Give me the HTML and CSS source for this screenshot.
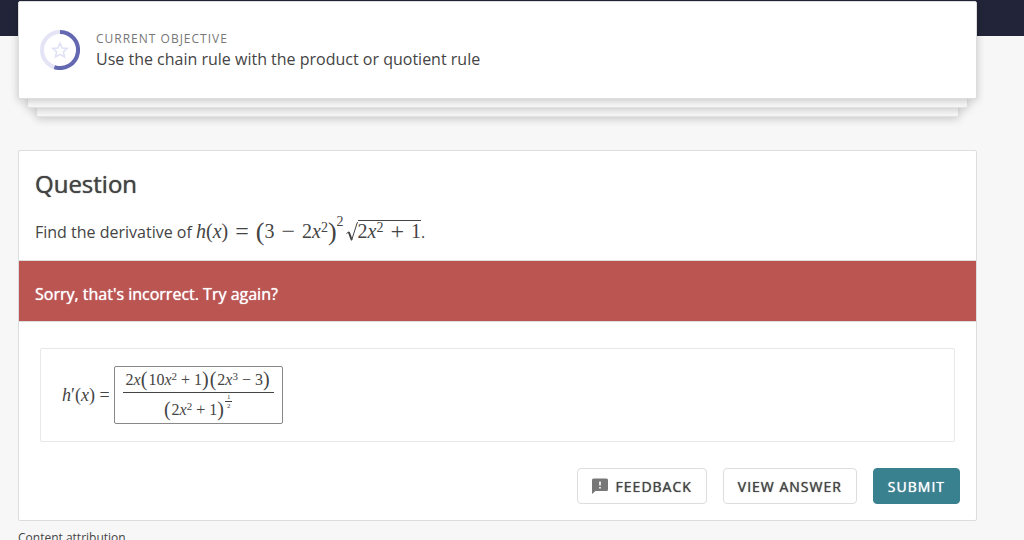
FILE: index.html
```html
<!DOCTYPE html>
<html lang="en">
    <head>
        <meta charset="utf-8">
        <title>Use the chain rule with the product or quotient rule</title>
        <link rel="stylesheet" href="styles.css">
    </head>
    <body>

        <div class="top-bar"></div>

        <main class="page">
            <section class="objective">
                <svg class="progress" viewBox="0 0 40 40" aria-hidden="true">
                    <circle class="ring" cx="20" cy="20" r="18" />
                    <path class="ring-done" d="M20 2 A18 18 0 1 1 14.4 37.1" />
                    <path class="star" d="M20 13.2 L22.1 18 L27.3 18.4 L23.4 21.9 L24.6 27 L20 24.3 L15.4 27 L16.6 21.9 L12.7 18.4 L17.9 18 Z" />
                </svg>
                <div>
                    <p class="objective-label">CURRENT OBJECTIVE</p>
                    <p class="objective-text">Use the chain rule with the product or quotient rule</p>
                </div>
            </section>
            <div class="stack stack-one"></div>
            <div class="stack stack-two"></div>

            <section class="question">
                <div class="question-body">
                    <h1>Question</h1>
                    <p class="prompt">Find the derivative of <span class="math"><i>h</i>(<i>x</i>) <span class="op">=</span> <span class="paren">(</span>3 <span class="op">−</span> 2<i>x</i><sup>2</sup><span class="paren">)</span><sup class="high">2</sup><svg class="radical" viewBox="0 0 12 20" aria-hidden="true"><path class="radical-thin" d="M0.5 11.5 L3 9.8 M5.5 18.5 L11.3 0.5 H12" /><path class="radical-thick" d="M2.8 10 L5.7 17.8" /></svg><span class="root">2<i>x</i><sup>2</sup> <span class="op">+</span> 1</span></span>.</p>
                </div>

                <p class="message" role="alert">Sorry, that's incorrect. Try again?</p>

                <div class="answer">
                    <span class="math-input answer-label" id="answer-label"><i>h</i>′(<i>x</i>) =</span>
                    <div class="answer-field math-input" role="textbox" tabindex="0" contenteditable="true" aria-labelledby="answer-label">
                        <div class="numerator">2<i>x</i><span class="paren">(</span>10<i>x</i><sup>2</sup> + 1<span class="paren">)</span><span class="paren">(</span>2<i>x</i><sup>3</sup> − 3<span class="paren">)</span></div>
                        <div class="denominator"><span class="paren">(</span>2<i>x</i><sup>2</sup> + 1<span class="paren">)</span><span class="exponent"><span>1</span><span class="exponent-bottom">2</span></span></div>
                    </div>
                </div>

                <div class="buttons">
                    <button type="button">
                        <svg class="feedback-icon" viewBox="0 0 16 16" aria-hidden="true">
                            <path fill-rule="evenodd" d="M1.5 0.5 H14.5 Q16 0.5 16 2 V11.5 Q16 13 14.5 13 H3.5 L0 16 V2 Q0 0.5 1.5 0.5 Z M7.2 3.5 V7.5 H8.8 V3.5 Z M7.2 9 V10.6 H8.8 V9 Z" />
                        </svg>
                        FEEDBACK
                    </button>
                    <button type="button">VIEW ANSWER</button>
                    <button type="submit" class="submit">SUBMIT</button>
                </div>
            </section>

            <a class="attribution" href="#">Content attribution</a>
        </main>

    </body>
</html>
```

FILE: styles.css
```css
* {
    box-sizing: border-box;
}
body {
    margin: 0;
    background-color: #f7f7f7;
    color: #444;
    font-family: "Open Sans", "Noto Sans", sans-serif;
    font-size: 16px;
}
p, h1 {
    margin: 0;
}
.top-bar {
    height: 36px;
    background-color: #222439;
}
.page {
    margin: -35px 47px 0 18px;
}

/* objective card with two more cards showing under it */
.objective {
    position: relative;
    z-index: 3;
    display: flex;
    align-items: center;
    gap: 16px;
    height: 98px;
    padding: 0 21px;
    background-color: white;
    border: 1px solid #ddd;
    border-radius: 2px;
    box-shadow: 0 2px 8px rgba(0, 0, 0, 0.2);
}
.progress {
    width: 40px;
    height: 40px;
    fill: none;
}
.ring {
    stroke: #e4e4f6;
    stroke-width: 4;
}
.ring-done {
    stroke: #6468b0;
    stroke-width: 4;
}
.star {
    stroke: #e0e1f5;
    stroke-width: 1.5;
}
.objective-label {
    color: #777;
    font-size: 12px;
    line-height: 18px;
    letter-spacing: 1px;
}
.objective-text {
    line-height: 22px;
}
.stack {
    position: relative;
    height: 9px;
    background-color: #fafafa;
    border: 1px solid #e4e4e4;
    border-top: none;
    box-shadow: 0 2px 8px rgba(0, 0, 0, 0.2);
}
.stack-one {
    z-index: 2;
    margin: 0 9px;
}
.stack-two {
    z-index: 1;
    margin: 0 18px;
}

.question {
    margin-top: 33px;
    padding-bottom: 16px;
    background-color: white;
    border: 1px solid #ddd;
    border-radius: 2px;
}
.question-body {
    padding: 16px 16px 11px;
}
/* a little heavier than regular, lighter than semibold */
h1, .message, button {
    font-weight: 400;
    text-shadow: 0 0 1px currentColor;
}
h1 {
    font-size: 24px;
    line-height: 34px;
}
.prompt {
    margin-top: 13px;
    line-height: 34px;
}
.message {
    padding: 21px 16px 15px;
    background-color: #ba5552;
    border-top: 1px solid #ddd;
    border-bottom: 1px solid #ddd;
    color: white;
    line-height: 24px;
}

/* formulas */
.math, .math-input {
    font-family: "Liberation Serif", serif;
    white-space: nowrap;
}
.math {
    font-size: 20px;
}
.math-input {
    font-size: 16px;
}
.math sup {
    font-size: 14px;
    line-height: 0;
    vertical-align: 6px;
}
.math .high {
    vertical-align: 12px;
}
.op {
    margin: 0 2px;
    font-size: 24px;
    line-height: 0;
    vertical-align: -1px;
}
.paren {
    font-size: 26px;
    line-height: 0;
    vertical-align: -2px;
}
.radical {
    width: 12px;
    height: 20px;
    margin-left: 2px;
    vertical-align: -4px;
    fill: none;
    stroke: #444;
}
.radical-thin {
    stroke-width: 1;
}
.radical-thick {
    stroke-width: 2;
}
.root {
    display: inline-block;
    border-top: 1px solid #444;
    line-height: 20px;
}
.math-input sup {
    font-size: 11px;
    line-height: 0;
    vertical-align: 5px;
}
.math-input .paren {
    margin-right: 1px;
    font-size: 20px;
    vertical-align: -1px;
}

.answer {
    display: flex;
    align-items: center;
    gap: 4px;
    margin: 26px 21px;
    padding: 17px 21px;
    border: 1px solid #e8e8e8;
    border-radius: 2px;
}
.answer .answer-label {
    font-size: 18px;
}
.answer-field {
    padding: 1px 8px;
    border: 1px solid #888;
    border-radius: 2px;
    text-align: center;
}
.numerator {
    padding: 0 3px;
    border-bottom: 1px solid #444;
    line-height: 24px;
}
.denominator {
    height: 29px;
    line-height: 24px;
}
.exponent {
    display: inline-block;
    font-size: 7px;
    line-height: 8px;
    vertical-align: 7px;
}
.exponent span {
    display: block;
    padding: 0 2px;
}
.exponent .exponent-bottom {
    border-top: 1px solid #444;
}

.buttons {
    display: flex;
    justify-content: flex-end;
    gap: 16px;
    padding: 0 16px;
}
button {
    display: flex;
    align-items: center;
    gap: 8px;
    height: 36px;
    padding: 0 14px;
    background-color: white;
    border: 1px solid #ddd;
    border-radius: 4px;
    color: #444;
    font-family: inherit;
    font-size: 14px;
    letter-spacing: 1px;
    cursor: pointer;
}
.submit {
    background-color: #3a8190;
    border-color: #3a8190;
    color: white;
}
.feedback-icon {
    width: 16px;
    height: 16px;
    fill: #777;
}
.attribution {
    display: inline-block;
    margin-top: 8px;
    color: #444;
    font-size: 12px;
    line-height: 18px;
    text-decoration: none;
}
```
